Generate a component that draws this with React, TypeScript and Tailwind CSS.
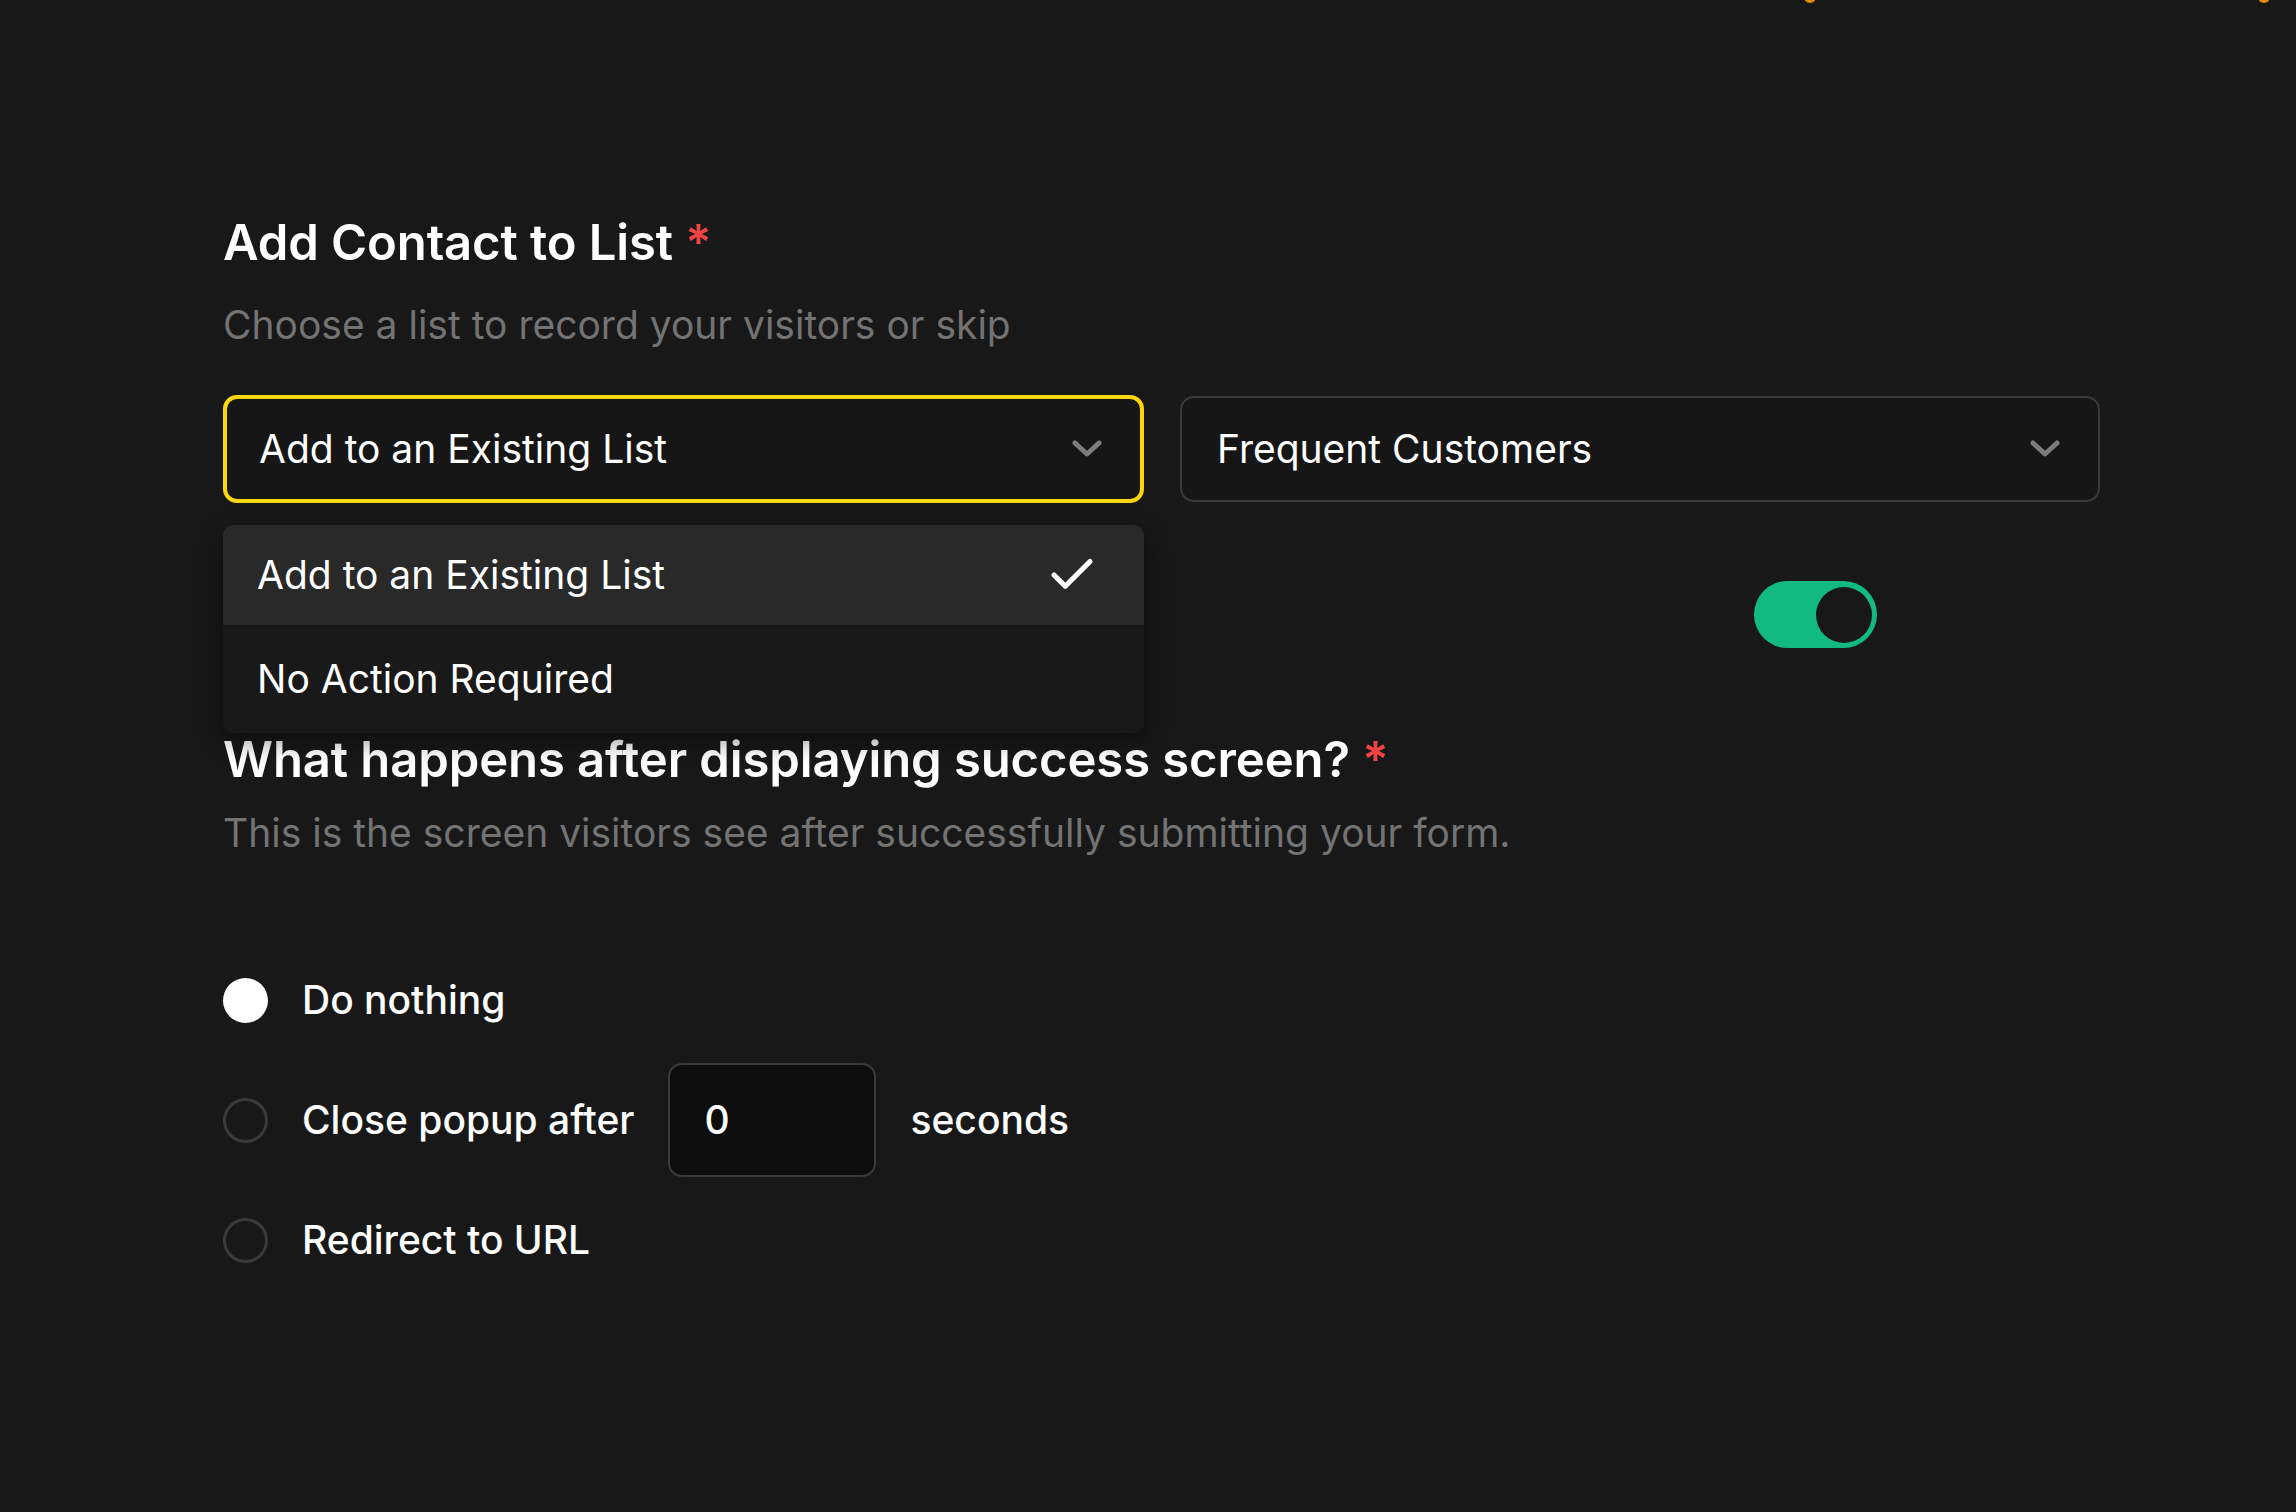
import { Check } from 'lucide-react';

function Chevron() {
  return (
    <svg width="30" height="18" viewBox="0 0 30 18" fill="none" className="shrink-0">
      <polyline points="3,3 15,14 27,3" stroke="#7c7c7c" strokeWidth="5" strokeLinecap="round" strokeLinejoin="round" />
    </svg>
  );
}

function Radio({ checked }: { checked?: boolean }) {
  if (checked) {
    return <span className="w-[45px] h-[45px] rounded-full bg-white shrink-0" />;
  }
  return <span className="w-[45px] h-[45px] rounded-full border-[3px] border-[#3a3a3a] shrink-0" />;
}

export default function App() {
  return (
    <div className="min-h-screen bg-[#181818] text-white font-['Inter','Noto_Sans',sans-serif]">
      <div className="flex h-[3px] overflow-hidden items-end justify-end gap-[442px] pr-[26px]">
        <span className="w-[12px] h-[12px] rounded-full bg-[#e58a00] shrink-0" />
        <span className="w-[12px] h-[12px] rounded-full bg-[#e58a00] shrink-0" />
      </div>

      <main className="pl-[223px] pt-[211px] pb-[200px]">
        <section>
          <h2 className="text-[49px] leading-[58px] font-semibold tracking-[-0.1px]">
            Add Contact to List <span className="text-[#ef4444]">*</span>
          </h2>
          <p className="mt-[31px] text-[39px] leading-[44px] text-[#737373]">
            Choose a list to record your visitors or skip
          </p>

          <div className="mt-[48px] flex gap-[36px] items-center w-[1877px]">
            <div className="relative w-[921px]">
              <button className="w-full h-[108px] flex items-center justify-between pl-[32px] pr-[38px] rounded-[14px] border-[4px] border-[#ffd60a] bg-[#161616] text-[39px] text-white">
                <span>Add to an Existing List</span>
                <Chevron />
              </button>

              <div className="absolute left-0 right-0 top-[130px] z-10 rounded-[10px] bg-[#191919] shadow-[0_8px_24px_rgba(0,0,0,0.45)] overflow-hidden">
                <div className="h-[100px] flex items-center justify-between pl-[34px] pr-[45px] bg-[#292929] text-[39px]">
                  <span>Add to an Existing List</span>
                  <Check size={54} strokeWidth={2.3} className="text-white" />
                </div>
                <div className="h-[108px] flex items-center pl-[34px] text-[39px]">
                  <span>No Action Required</span>
                </div>
              </div>
            </div>

            <button className="w-[920px] h-[106px] flex items-center justify-between pl-[35px] pr-[38px] rounded-[14px] border-2 border-[#3a3a3a] bg-[#161616] text-[39px] text-white">
              <span>Frequent Customers</span>
              <Chevron />
            </button>
          </div>

          <div className="mt-[78px] flex items-center w-[1654px] justify-end">
            <span className="w-[123px] h-[67px] rounded-full bg-[#12b981] flex items-center justify-end pr-[5px]">
              <span className="w-[56px] h-[56px] rounded-full bg-[#181818]" />
            </span>
          </div>
        </section>

        <section className="mt-[83px]">
          <h2 className="text-[49px] leading-[58px] font-semibold tracking-[-0.1px]">
            What happens after displaying success screen? <span className="text-[#ef4444]">*</span>
          </h2>
          <p className="mt-[22px] text-[39px] leading-[44px] text-[#737373]">
            This is the screen visitors see after successfully submitting your form.
          </p>

          <div className="mt-[88px] flex flex-col gap-[6px] text-[39px] font-medium">
            <label className="h-[114px] flex items-center gap-[34px]">
              <Radio checked />
              <span>Do nothing</span>
            </label>
            <label className="h-[114px] flex items-center gap-[34px]">
              <Radio />
              <span>Close popup after</span>
              <span className="w-[208px] h-[114px] rounded-[14px] border-2 border-[#3a3a3a] bg-[#0c0c0c] flex items-center pl-[34px]">
                0
              </span>
              <span>seconds</span>
            </label>
            <label className="h-[114px] flex items-center gap-[34px]">
              <Radio />
              <span>Redirect to URL</span>
            </label>
          </div>
        </section>
      </main>
    </div>
  );
}
